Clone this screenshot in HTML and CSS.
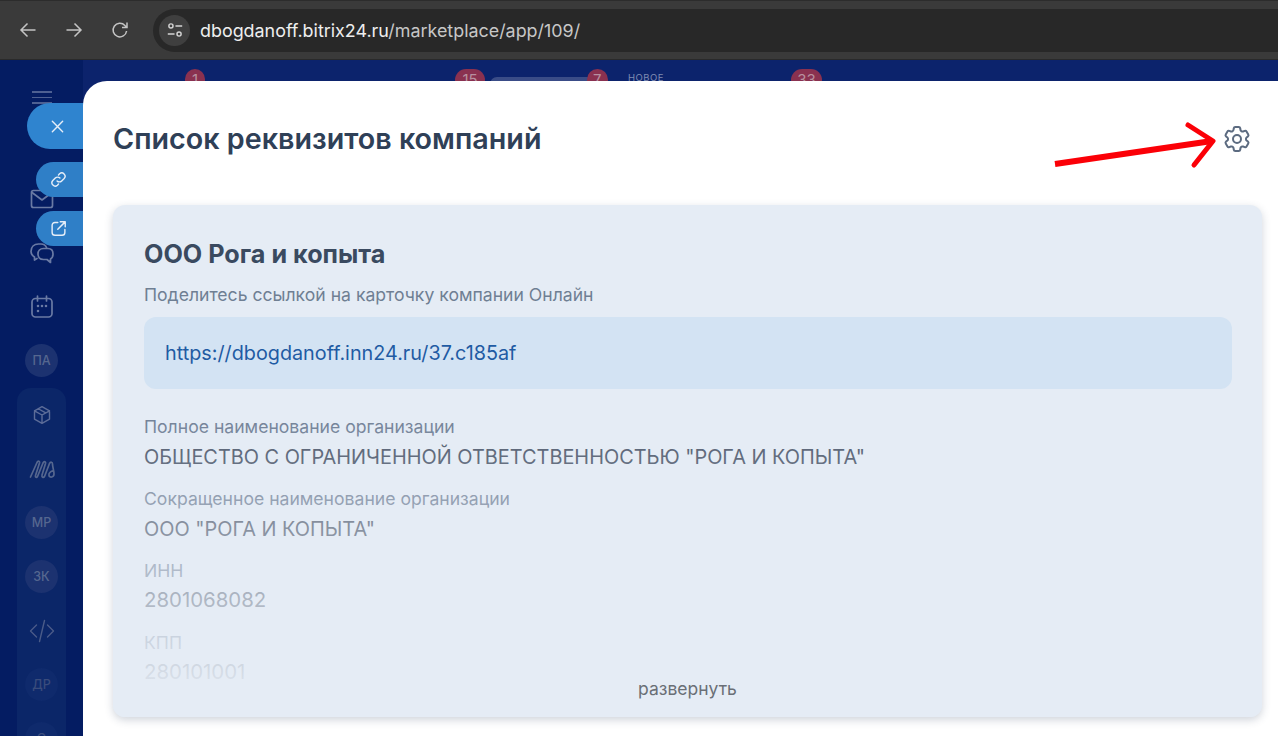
FILE: index.html
```html
<!DOCTYPE html>
<html lang="ru">
<head>
<meta charset="utf-8">
<title>Список реквизитов компаний</title>
<link rel="stylesheet" href="styles.css">
</head>
<body>
<header class="toolbar">
  <svg class="nav-icon" viewBox="0 0 20 20"><path d="M17.500 10H3M9.500 3.500 3 10l6.500 6.500"/></svg>
  <svg class="nav-icon" viewBox="0 0 20 20"><path d="M2.500 10H17M10.500 3.500 17 10l-6.500 6.500"/></svg>
  <svg class="nav-icon" viewBox="0 0 20 20"><path d="M16.600 11a6.800 6.800 0 1 1-1.700-5.500L17 7.600M17 2.600v5h-5"/></svg>
  <div class="omnibox">
    <span class="site-chip">
      <svg viewBox="0 0 20 20"><circle cx="5.500" cy="5.500" r="2.300"/><path d="M10.500 5.500H18M2 14.500h7.500"/><circle cx="14.500" cy="14.500" r="2.300"/></svg>
    </span>
    <span class="url"><span class="host">dbogdanoff.bitrix24.ru</span>/marketplace/app/109/</span>
  </div>
</header>

<div class="portal">
  <div class="top-peek">
    <span class="peek-bar"></span>
    <span class="badge b1">1</span>
    <span class="badge b2">15</span>
    <span class="badge b3">7</span>
    <span class="peek-new">НОВОЕ</span>
    <span class="badge b4">33</span>
  </div>

  <nav class="rail">
    <div class="burger"><i></i><i></i><i></i></div>
    <div class="rail-line"></div>
    <div class="rail-row"><svg class="rail-icon mail" viewBox="0 0 24 24"><rect x="1.500" y="3.500" width="21" height="17" rx="2"/><path d="m2 5.500 10 7.500 10-7.500"/></svg></div>
    <div class="rail-row"><svg class="rail-icon chat" viewBox="0 0 24 24"><path d="M7 17.500 4.500 19v-3C2 14.500 1 12.500 1 10.500 1 6 4 3 8.500 3H11c2.500 0 4.500 1 5.500 3.500"/><path d="M13.500 7.500H18c3.500 0 5 2.500 5 5.500 0 2.500-1 4.200-2.500 5v3.500L17 18.500h-3.500C9.500 18.500 8 16 8 13s2-5.500 5.500-5.500z"/></svg></div>
    <div class="rail-row"><svg class="rail-icon cal" viewBox="0 0 24 24"><rect x="2" y="3.500" width="20" height="18.500" rx="3.500"/><path d="M7.500 1v5M16.500 1v5"/><path class="dots" d="M8 11h.01M12 11h.01M16 11h.01M8 16h.01"/></svg></div>
    <div class="rail-row"><span class="avatar">ПА</span></div>
    <div class="rail-group">
      <div class="rail-row"><svg class="rail-icon box" viewBox="0 0 24 24"><path d="m12 2 9 5v10l-9 5-9-5V7zM3 7l9 5 9-5M12 12v10M7.500 4.500l9 5"/></svg></div>
      <div class="rail-row"><svg class="rail-icon logo" viewBox="0 0 26 20"><path d="M1.500 18 8 3.500C9 1.500 11 2 10.500 4L6.500 16.500C6 18.500 7.500 19 8.500 17.500L14 4c1-2 3-1.500 2.500.5L13 16c-.5 2.500 1.500 3 2.500 1.500L20.500 4.500c1-2 3-1.500 3 .5 0 3 1.500 6.500 1.500 10 0 3.500-4.500 4-5 1.500-.4-2 1.500-4 4.500-5"/></svg></div>
      <div class="rail-row"><span class="avatar">МР</span></div>
      <div class="rail-row"><span class="avatar">ЗК</span></div>
      <div class="rail-row"><svg class="rail-icon code" viewBox="0 0 26 26"><path d="M7.500 7 1.500 13l6 6M18.500 7l6 6-6 6M15.500 2.500l-5 21"/></svg></div>
      <div class="rail-row"><span class="avatar dim">ДР</span></div>
      <div class="rail-row"><span class="avatar dim">О</span></div>
    </div>
  </nav>

  <div class="side-tabs">
    <button class="tab tab-close"><svg viewBox="0 0 16 16"><path d="M2.500 2.500l11 11M13.500 2.500l-11 11"/></svg></button>
    <button class="tab tab-link"><svg viewBox="0 0 24 24"><path d="M10 14a4.500 4.500 0 0 0 6.500 0l3.500-3.500A4.600 4.600 0 0 0 13.500 4L12 5.500"/><path d="M14 10a4.500 4.500 0 0 0-6.500 0L4 13.500a4.600 4.600 0 0 0 6.500 6.500l1.500-1.500"/></svg></button>
    <button class="tab tab-open"><svg viewBox="0 0 24 24"><path d="M11 3.500H7A4 4 0 0 0 3 7.500v10a4 4 0 0 0 4 4h10a4 4 0 0 0 4-4v-4"/><path d="M11 13 21 3M14.500 2.500H21.500V9.500"/></svg></button>
  </div>

  <main class="panel">
    <div class="panel-head">
      <h1>Список реквизитов компаний</h1>
      <svg class="gear" viewBox="0 0 24 24"><path d="M9.594 3.940c.09-.542.56-.94 1.110-.94h2.593c.55 0 1.020.398 1.110.94l.213 1.281c.063.374.313.686.645.870.074.040.147.083.22.127.325.196.72.257 1.075.124l1.217-.456a1.125 1.125 0 0 1 1.370.49l1.296 2.247a1.125 1.125 0 0 1-.26 1.431l-1.003.827c-.293.241-.438.613-.43.992a7.723 7.723 0 0 1 0 .255c-.008.378.137.75.43.991l1.004.827c.424.35.534.955.26 1.430l-1.298 2.247a1.125 1.125 0 0 1-1.369.491l-1.217-.456c-.355-.133-.75-.072-1.076.124a6.470 6.470 0 0 1-.22.128c-.331.183-.581.495-.644.869l-.213 1.281c-.09.543-.56.94-1.110.94h-2.594c-.55 0-1.019-.398-1.110-.94l-.213-1.281c-.062-.374-.312-.686-.644-.870a6.520 6.520 0 0 1-.22-.127c-.325-.196-.72-.257-1.076-.124l-1.217.456a1.125 1.125 0 0 1-1.369-.49l-1.297-2.247a1.125 1.125 0 0 1 .26-1.431l1.004-.827c.292-.24.437-.613.43-.991a6.932 6.932 0 0 1 0-.255c.007-.38-.138-.751-.43-.992l-1.004-.827a1.125 1.125 0 0 1-.26-1.430l1.297-2.247a1.125 1.125 0 0 1 1.370-.491l1.216.456c.356.133.751.072 1.076-.124.072-.044.146-.086.22-.128.332-.183.582-.495.644-.869l.214-1.280Z"/><circle cx="12" cy="12" r="3"/></svg>
    </div>
    <section class="card">
      <h2>ООО Рога и копыта</h2>
      <p class="share">Поделитесь ссылкой на карточку компании Онлайн</p>
      <div class="link-box"><a href="#">https://dbogdanoff.inn24.ru/37.c185af</a></div>
      <dl class="fields">
        <dt>Полное наименование организации</dt>
        <dd>ОБЩЕСТВО С ОГРАНИЧЕННОЙ ОТВЕТСТВЕННОСТЬЮ "РОГА И КОПЫТА"</dd>
        <dt>Сокращенное наименование организации</dt>
        <dd>ООО "РОГА И КОПЫТА"</dd>
        <dt>ИНН</dt>
        <dd class="num">2801068082</dd>
        <dt>КПП</dt>
        <dd class="num">280101001</dd>
        <dt>ОГРН</dt>
      </dl>
      <div class="fade"></div>
      <button class="expand">развернуть</button>
    </section>
  </main>

  <svg class="arrow" viewBox="0 0 170 60"><path class="shaft" d="M3 43 160 20"/><path d="M136 4 161 20 142 44"/></svg>
</div>
</body>
</html>
```

FILE: styles.css
```css
* { box-sizing: border-box; }
html, body { margin: 0; height: 100%; overflow: hidden; }
body {
  width: 1278px;
  height: 736px;
  display: flex;
  flex-direction: column;
  font-family: Inter, "Noto Sans", sans-serif;
  background: #0a2064;
}

.toolbar {
  height: 60px;
  flex: none;
  display: flex;
  align-items: center;
  gap: 26px;
  padding: 0 0 0 18px;
  background: #3a3a3a;
  border-top: 1px solid #2c2c2c;
  border-bottom: 1px solid #2a2a2a;
}
.nav-icon {
  width: 20px;
  height: 20px;
  fill: none;
  stroke: #c4c4c4;
  stroke-width: 1.500;
}
.omnibox {
  margin-left: -3px;
  flex: 1;
  height: 43px;
  display: flex;
  align-items: center;
  gap: 10px;
  padding-left: 6px;
  background: #282828;
  border-radius: 22px 0 0 22px;
  color: #c7c7c7;
  font-size: 17.900px;
}
.site-chip {
  width: 31px;
  height: 31px;
  display: flex;
  align-items: center;
  justify-content: center;
  border-radius: 50%;
  background: #3f3f3f;
}
.site-chip svg {
  width: 18px;
  height: 18px;
  fill: none;
  stroke: #d4d4d4;
  stroke-width: 1.600;
}
.host { color: #eeeeee; }

.portal {
  position: relative;
  flex: 1;
  display: flex;
  min-height: 0;
  overflow: hidden;
  background: linear-gradient(90deg, #041c62 0, #041c62 83px, #0c236c 83px);
}

.top-peek {
  position: absolute;
  top: 9px;
  left: 0;
  right: 0;
  height: 30px;
}
.badge {
  position: absolute;
  top: 0;
  height: 22px;
  min-width: 20px;
  padding: 0 6px;
  border-radius: 11px;
  background: #8a3150;
  color: #b7909f;
  font-size: 15px;
  line-height: 22px;
  text-align: center;
}
.b1 { left: 185px; }
.b2 { left: 455px; width: 30px; }
.b3 { left: 587px; }
.b4 { left: 791px; width: 31px; }
.peek-bar {
  position: absolute;
  left: 490px;
  top: 8px;
  width: 104px;
  height: 14px;
  border-radius: 7px;
  background: #3a4c87;
}
.peek-new {
  position: absolute;
  left: 628px;
  top: 3px;
  color: #7f8bb2;
  font-size: 9.500px;
  letter-spacing: .5px;
}

.rail {
  width: 83px;
  flex: none;
  display: flex;
  flex-direction: column;
  align-items: center;
  padding-top: 31px;
  color: #5e6f9d;
}
.burger {
  width: 20px;
  display: flex;
  flex-direction: column;
  gap: 4px;
}
.burger i {
  height: 1.500px;
  background: #4e6092;
}
.rail-line {
  width: 16px;
  height: 1px;
  margin-top: 50px;
  margin-bottom: 18px;
  background: #5e6f9d;
}
.rail-row {
  width: 49px;
  height: 54px;
  flex: none;
  display: flex;
  align-items: center;
  justify-content: center;
}
.rail-icon {
  flex: none;
  fill: none;
  stroke: #6a7aa4;
  stroke-width: 1.700;
  stroke-linecap: round;
  stroke-linejoin: round;
}
.mail { width: 24px; height: 24px; }
.chat { width: 24px; height: 24px; }
.cal { width: 24px; height: 24px; }
.dots { stroke-width: 2.600; }
.avatar {
  width: 33px;
  height: 33px;
  flex: none;
  border-radius: 50%;
  display: flex;
  align-items: center;
  justify-content: center;
  background: #1c3270;
  color: #56678f;
  font-size: 12.500px;
  font-weight: 500;
}
.avatar.dim { color: #3a4c7c; background: #0f2a6c; }
.rail-group {
  width: 49px;
  flex: none;
  border-radius: 14px 14px 0 0;
  background: #0b2668;
}
.box { width: 20px; height: 20px; stroke: #5c6c98; }
.logo { width: 26px; height: 20px; stroke: #56678f; }
.code { width: 26px; height: 26px; stroke: #4a5b88; stroke-width: 1.400; }

.side-tabs {
  position: absolute;
  left: 0;
  top: 43px;
  width: 83px;
}
.tab {
  position: absolute;
  right: -1px;
  display: flex;
  align-items: center;
  padding: 0;
  border: 0;
  background: #2f84cf;
}
.tab svg { fill: none; stroke: #e6eef8; stroke-linecap: round; stroke-linejoin: round; }
.tab-close {
  top: 0;
  width: 57px;
  height: 46px;
  padding-left: 23px;
  border-radius: 23px 0 0 23px;
}
.tab-close svg { width: 15px; height: 15px; stroke-width: 1.500; }
.tab-link, .tab-open {
  width: 48px;
  height: 35px;
  padding-left: 14px;
  border-radius: 17.500px 0 0 17.500px;
  background: #2f7fc7;
}
.tab-link { top: 59px; }
.tab-open { top: 108px; }
.tab-link svg, .tab-open svg { width: 17px; height: 17px; stroke-width: 2; }

.panel {
  flex: 1;
  position: relative;
  margin-top: 21px;
  padding: 0 16px 0 30px;
  min-width: 0;
  background: #fff;
  border-radius: 24px 0 0 0;
}
.panel-head {
  height: 124px;
  display: flex;
  align-items: center;
  justify-content: space-between;
  padding: 0 9px 9px 0;
}
h1 {
  margin: 0;
  color: #2f4057;
  font-size: 28.700px;
  font-weight: 600;
}
.gear {
  width: 32px;
  height: 32px;
  fill: none;
  stroke: #5c6b80;
  stroke-width: 1.500;
  stroke-linejoin: round;
}
.card {
  position: relative;
  height: 512px;
  padding: 34px 30px 0 31px;
  overflow: hidden;
  background: #e5ecf5;
  border-radius: 12px;
  box-shadow: 0 3px 8px rgba(40, 60, 90, .22);
}
h2 {
  margin: 0;
  color: #3a4a60;
  font-size: 25.200px;
  font-weight: 700;
  line-height: 30px;
}
.share {
  margin: 14px 0 0;
  color: #6f7f93;
  font-size: 17.600px;
  line-height: 24px;
}
.link-box {
  height: 72px;
  margin-top: 10px;
  padding-left: 21px;
  display: flex;
  align-items: center;
  background: #d3e3f3;
  border-radius: 12px;
}
.link-box a {
  color: #1f5ba3;
  font-size: 19.800px;
  text-decoration: none;
}
.fields { margin: 26px 0 0; }
dt {
  color: #718096;
  font-size: 17.600px;
  line-height: 24px;
}
dd {
  margin: 0 0 12px;
  color: #4a5568;
  font-size: 19.900px;
  line-height: 36px;
  height: 36px;
  white-space: nowrap;
}
.num { font-size: 20.400px; line-height: 34px; }
.fade {
  position: absolute;
  left: 0;
  right: 0;
  top: 205px;
  bottom: 0;
  background: linear-gradient(rgba(229, 236, 245, 0), #e5ecf5 96%);
}
.expand {
  position: absolute;
  left: 0;
  right: 0;
  bottom: 17px;
  padding: 0;
  border: 0;
  background: none;
  color: #6a6f76;
  font: 400 17.500px/22px Inter, sans-serif;
  text-align: center;
}

.arrow {
  position: absolute;
  left: 1052px;
  top: 61px;
  width: 170px;
  height: 60px;
  fill: none;
  stroke: #fb0007;
  stroke-width: 5;
  stroke-linecap: round;
  stroke-linejoin: round;
}
.shaft { stroke-width: 6; stroke-linecap: butt; }
```
